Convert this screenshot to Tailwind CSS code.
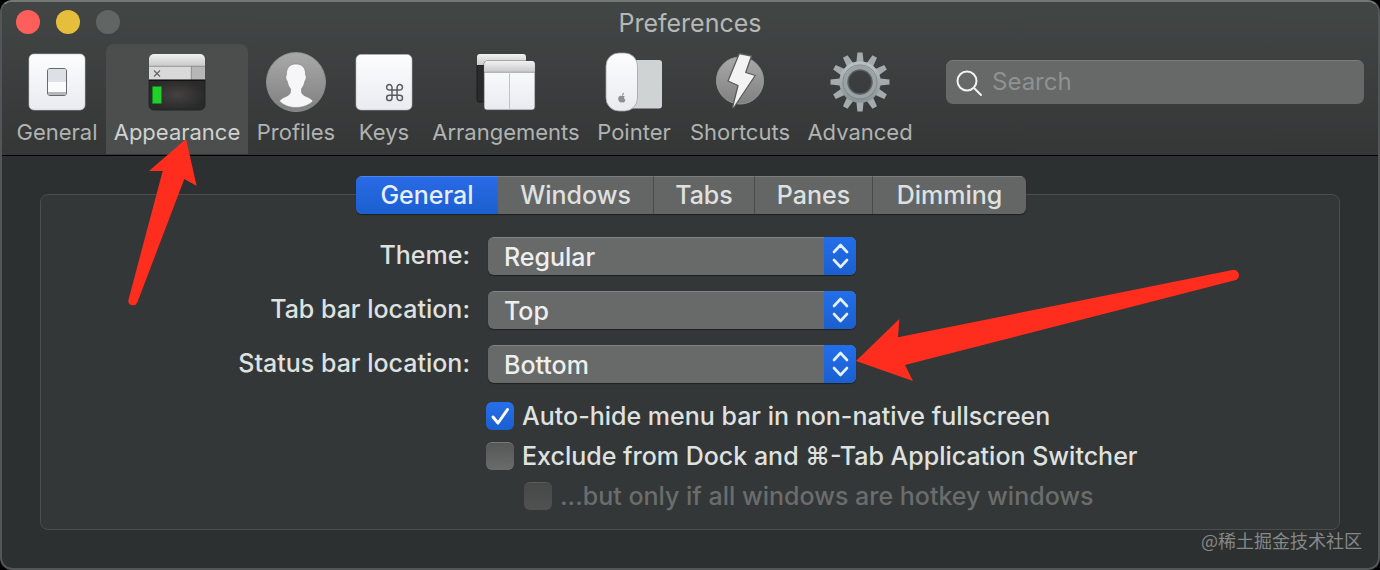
<!DOCTYPE html>
<html lang="en" class="bg-black">
<head>
  <meta charset="UTF-8" />
  <meta name="viewport" content="width=device-width, initial-scale=1.0"/>
  <title>Preferences</title>

  <!-- Tailwind CSS -->
  <script src="https://cdn.jsdelivr.net/npm/@tailwindcss/browser@4"></script>
</head>
<body class="bg-black font-['Inter','Noto_Sans_CJK_SC',sans-serif] text-[#dfe1e0]">

  <!-- Window -->
  <div class="relative min-h-screen flex flex-col overflow-hidden rounded-[12px] border-2 border-[#535656] border-t-[#757878] bg-[#2d3030]">

    <!-- Title bar + toolbar -->
    <header class="border-b border-black bg-linear-to-b from-[#424645] to-[#353737]">
      <div class="relative h-[42px] flex items-center px-3.5">
        <div class="flex gap-4 pb-0.5">
          <button aria-label="Close" class="size-6 rounded-full bg-[#fe5f5b]"></button>
          <button aria-label="Minimize" class="size-6 rounded-full bg-[#e5bf3c]"></button>
          <button aria-label="Zoom" class="size-6 rounded-full bg-[#616564]" disabled></button>
        </div>
        <h1 class="absolute inset-x-0 text-center text-[25px] leading-[42px] text-[#b5b8b7] pointer-events-none">Preferences</h1>
      </div>

      <div class="flex items-start justify-between h-[111px] pl-1.5 pr-3.5">
        <nav class="flex text-[22px] leading-7 text-[#b0b3b2]">
          <button class="w-[98px] h-[110px] pt-2 flex flex-col items-center gap-1.5">
            <svg class="size-[60px]" viewBox="0 0 60 60">
              <defs>
                <linearGradient id="white" x1="0" y1="0" x2="0" y2="1"><stop offset="0" stop-color="#fdfdfe"/><stop offset="1" stop-color="#e9ebf0"/></linearGradient>
                <linearGradient id="bar" x1="0" y1="0" x2="0" y2="1"><stop offset="0" stop-color="#f1f1f1"/><stop offset="1" stop-color="#c9c9cb"/></linearGradient>
                <linearGradient id="disc" x1="0" y1="0" x2="0" y2="1"><stop offset="0" stop-color="#a9a9a9"/><stop offset="1" stop-color="#808080"/></linearGradient>
                <linearGradient id="steel" x1="0" y1="0" x2="0" y2="1"><stop offset="0" stop-color="#b9bfc1"/><stop offset="1" stop-color="#8d9598"/></linearGradient>
              </defs>
              <rect x="2" y="2" width="56" height="56" rx="5" fill="url(#white)" stroke="#c5c8cb" stroke-width=".6"/>
              <rect x="20.5" y="16.5" width="19" height="27" rx="2.5" fill="#fafbfc" stroke="#66696d"/>
              <path d="M21 19a2 2 0 0 1 2-2h14a2 2 0 0 1 2 2v11H21z" fill="#dde0e5"/>
              <path d="M21 40h18v1a2 2 0 0 1-2 2H23a2 2 0 0 1-2-2z" fill="#b4b7ba"/>
            </svg>
            <span>General</span>
          </button>
          <button class="w-[142px] h-[110px] pt-2 flex flex-col items-center gap-1.5 rounded-t-lg bg-[#4b4e4d] text-[#cfd2d1]" aria-current="page">
            <svg class="size-[60px]" viewBox="0 0 60 60">
              <defs><radialGradient id="term"><stop offset="0" stop-color="#454241"/><stop offset="1" stop-color="#2a2a2a"/></radialGradient></defs>
              <path d="M2 28h56v25a5 5 0 0 1-5 5H7a5 5 0 0 1-5-5z" fill="url(#term)" stroke="#1d1e1e" stroke-width=".8"/>
              <path d="M2 14V7a5 5 0 0 1 5-5h46a5 5 0 0 1 5 5v7z" fill="url(#bar)"/>
              <path d="M2 14h42v14H2z" fill="#d9d9da"/>
              <path d="M44 14h14v14H44z" fill="#b7b7b8"/>
              <path d="M2 14.3h56M44.3 14v14" stroke="#858585" stroke-width=".8"/>
              <path d="M2 28h56" stroke="#000" stroke-width="1.2"/>
              <path d="m7 18.500 6 6m0-6-6 6" stroke="#666" stroke-width="1.2"/>
              <rect x="5" y="34" width="10" height="18" rx="1" fill="#138a1b"/>
              <rect x="6" y="35" width="8" height="16" fill="#20d12c"/>
            </svg>
            <span>Appearance</span>
          </button>
          <button class="w-[96px] h-[110px] pt-2 flex flex-col items-center gap-1.5">
            <svg class="size-[60px]" viewBox="0 0 60 60">
              <circle cx="30" cy="30" r="29.500" fill="url(#disc)" stroke="#8c8e8e"/>
              <path d="M30 12c6.500 0 9.800 4 9.500 11 1.200.5.700 5-.6 6-.6 3.500-2 6-3.400 7.500v4c1 4 9 4.500 11.500 8.500C43 53 37 55.500 30 55.500S17 53 13.500 49c2.500-4 10-4.500 11-8.500v-4c-1.500-1.500-2.700-4-3.300-7.500-1.400-1-1.900-5.500-.7-6-.3-7 3-11 9.500-11z" fill="#f6f6f8" stroke="#777" stroke-width=".5"/>
            </svg>
            <span>Profiles</span>
          </button>
          <button class="w-[80px] h-[110px] pt-2 flex flex-col items-center gap-1.5">
            <svg class="size-[60px]" viewBox="0 0 60 60">
              <rect x="2" y="2.500" width="56" height="55.500" rx="5" fill="url(#white)" stroke="#b4b7ba" stroke-width=".6"/>
              <path d="M38 38v-2.600a2.700 2.700 0 1 0-2.700 2.600h10.500a2.700 2.700 0 1 0-2.700-2.600v10.500a2.700 2.700 0 1 0 2.700-2.700H35.300a2.700 2.700 0 1 0 2.700 2.700z" fill="none" stroke="#585b5f" stroke-width="1.500"/>
            </svg>
            <span>Keys</span>
          </button>
          <button class="w-[164px] h-[110px] pt-2 flex flex-col items-center gap-1.5">
            <svg class="size-[60px]" viewBox="0 0 60 60">
              <path d="M1 13h30v37H3a2 2 0 0 1-2-2z" fill="#2a2a2b" stroke="#151616" stroke-width=".8"/>
              <path d="M1 13V5a3 3 0 0 1 3-3h43a3 3 0 0 1 3 3v8z" fill="url(#bar)"/>
              <rect x="8" y="9" width="51" height="49" rx="3" fill="url(#white)" stroke="#4a4c4d" stroke-width=".7"/>
              <path d="M8.300 20v-8a3 3 0 0 1 3-3H56a3 3 0 0 1 2.700 3v8z" fill="url(#bar)"/>
              <path d="M8 20.300h51" stroke="#8c8e91" stroke-width=".8"/>
              <path d="M33.500 20v38" stroke="#bbbdc1" stroke-width=".9"/>
            </svg>
            <span>Arrangements</span>
          </button>
          <button class="w-[92px] h-[110px] pt-2 flex flex-col items-center gap-1.5">
            <svg class="size-[60px]" viewBox="0 0 60 60">
              <rect x="20" y="8" width="38" height="48.500" rx="3" fill="#d0d3d4"/>
              <rect x="2" y="1" width="31.500" height="58" rx="13" fill="url(#white)" stroke="#9fa2a4" stroke-width=".8"/>
              <path d="M18 43.500c0-1.500.8-2.500 2-2.800 0 1.500-.8 2.500-2 2.800zm2.600.7c-.9 1.300-.5 3 .9 3.700-.7 1.800-1.600 2.900-2.500 2.600-.7-.3-1.200-.3-1.900 0-1.400.5-3.100-2.200-2.900-4.200.2-2 2-2.900 3.600-2.200 1-.5 2-.5 2.800.1z" fill="#8d8f92"/>
            </svg>
            <span>Pointer</span>
          </button>
          <button class="w-[120px] h-[110px] pt-2 flex flex-col items-center gap-1.5">
            <svg class="size-[60px]" viewBox="0 0 60 60">
              <circle cx="30" cy="28.500" r="23.500" fill="url(#disc)" stroke="#979999"/>
              <path d="M29.300 1.500 41.500 4l-5.800 16.500 9.500 3L23.500 56l-1-.5 5.500-22-10-4.500z" fill="#f3f3f4" stroke="#5b5c5d" stroke-width="1.300" stroke-linejoin="round"/>
            </svg>
            <span>Shortcuts</span>
          </button>
          <button class="w-[120px] h-[110px] pt-2 flex flex-col items-center gap-1.5">
            <svg class="size-[60px]" viewBox="0 0 60 60">
              <!-- each shape is a pair of opposite teeth -->
              <defs><path id="teeth" d="M27.400.5h5.200L33.800 12h-7.600zM27.400 59.500h5.200L33.800 48h-7.600z"/></defs>
              <g fill="#a4abae">
                <use href="#teeth"/>
                <use href="#teeth" transform="rotate(30 30 30)"/>
                <use href="#teeth" transform="rotate(60 30 30)"/>
                <use href="#teeth" transform="rotate(90 30 30)"/>
                <use href="#teeth" transform="rotate(120 30 30)"/>
                <use href="#teeth" transform="rotate(150 30 30)"/>
              </g>
              <circle cx="30" cy="30" r="16.500" fill="none" stroke="url(#steel)" stroke-width="8.500"/>
              <circle cx="30" cy="30" r="17" fill="none" stroke="#7d8588" stroke-width="1"/>
              <circle cx="30" cy="30" r="14.500" fill="none" stroke="#9ba3a5" stroke-width="3.500"/>
              <circle cx="30" cy="30" r="12" fill="none" stroke="#5b6365" stroke-width="1.500"/>
            </svg>
            <span>Advanced</span>
          </button>
        </nav>

        <label class="mt-4 flex h-11 w-[418px] items-center gap-2 rounded-[7px] border-t border-[#7a7d7c] bg-[#666968] pl-2.5">
          <svg class="size-7" viewBox="0 0 28 28" fill="none" stroke="#f2f3f3" stroke-width="2" stroke-linecap="round">
            <circle cx="11" cy="12" r="9.500"/>
            <path d="m18 19 7 7"/>
          </svg>
          <input type="search" aria-label="Search" placeholder="Search"
                 class="min-w-0 flex-1 bg-transparent pb-0.5 text-2xl leading-8 outline-none placeholder:text-[#8e9291]"/>
        </label>
      </div>
    </header>

    <!-- Appearance pane -->
    <main class="flex flex-1 flex-col px-[38px] pt-[38px] pb-[38px]">
      <section class="flex-1 rounded-lg border border-[#4a4e4d] bg-[#343737] text-[25px] leading-8 font-medium">

        <div class="-mt-[19px] flex justify-center pl-0.5">
          <div class="flex h-[38px] overflow-hidden rounded-md bg-[#646665] shadow-[0_1px_1px_#1f2121]" role="tablist">
            <button role="tab" aria-selected="true" class="w-[142px] border-t border-[#4a86ee] bg-linear-to-b from-[#2a6ae6] to-[#1b5fd0] pb-0.5 text-[#e4eefc]">General</button>
            <button role="tab" class="w-[156px] border-t border-r border-t-[#7c7e7d] border-r-[#484b4a] pb-0.5">Windows</button>
            <button role="tab" class="w-[101px] border-t border-r border-t-[#7c7e7d] border-r-[#484b4a] pb-0.5">Tabs</button>
            <button role="tab" class="w-[118px] border-t border-r border-t-[#7c7e7d] border-r-[#484b4a] pb-0.5">Panes</button>
            <button role="tab" class="w-[153px] border-t border-t-[#7c7e7d] pb-0.5">Dimming</button>
          </div>
        </div>

        <div class="mt-[23px] grid grid-cols-[429px_368px] items-center gap-x-[18px] gap-y-4">
          <label for="theme" class="pb-0.5 text-right">Theme:</label>
          <div class="relative h-[38px]">
            <select id="theme" class="h-full w-full appearance-none rounded-md border-t border-[#828483] bg-[#686a69] pl-4 text-[#eeefef] shadow-[0_1px_1px_#1f2121]">
              <option>Regular</option>
            </select>
            <svg class="pointer-events-none absolute right-0 top-0 h-[38px] w-8 rounded-r-md bg-linear-to-b from-[#226fea] to-[#1b5fd0]" viewBox="0 0 32 38" fill="none" stroke="#e3effd" stroke-width="2.600" stroke-linecap="round" stroke-linejoin="round">
              <path d="m10 15 6.500-7 6.500 7M10 23l6.500 7 6.500-7"/>
            </svg>
          </div>

          <label for="tabbar" class="pb-0.5 text-right">Tab bar location:</label>
          <div class="relative h-[38px]">
            <select id="tabbar" class="h-full w-full appearance-none rounded-md border-t border-[#828483] bg-[#686a69] pl-4 text-[#eeefef] shadow-[0_1px_1px_#1f2121]">
              <option>Top</option>
            </select>
            <svg class="pointer-events-none absolute right-0 top-0 h-[38px] w-8 rounded-r-md bg-linear-to-b from-[#226fea] to-[#1b5fd0]" viewBox="0 0 32 38" fill="none" stroke="#e3effd" stroke-width="2.600" stroke-linecap="round" stroke-linejoin="round">
              <path d="m10 15 6.500-7 6.500 7M10 23l6.500 7 6.500-7"/>
            </svg>
          </div>

          <label for="statusbar" class="pb-0.5 text-right">Status bar location:</label>
          <div class="relative h-[38px]">
            <select id="statusbar" class="h-full w-full appearance-none rounded-md border-t border-[#828483] bg-[#686a69] pl-4 text-[#eeefef] shadow-[0_1px_1px_#1f2121]">
              <option>Bottom</option>
            </select>
            <svg class="pointer-events-none absolute right-0 top-0 h-[38px] w-8 rounded-r-md bg-linear-to-b from-[#226fea] to-[#1b5fd0]" viewBox="0 0 32 38" fill="none" stroke="#e3effd" stroke-width="2.600" stroke-linecap="round" stroke-linejoin="round">
              <path d="m10 15 6.500-7 6.500 7M10 23l6.500 7 6.500-7"/>
            </svg>
          </div>
        </div>

        <div class="mt-[17px] ml-[445px] flex flex-col gap-2">
          <label class="flex items-center gap-2">
            <span class="relative size-7">
              <input type="checkbox" checked class="block size-7 appearance-none rounded-md bg-linear-to-b from-[#2670ea] to-[#1b5fd0]"/>
              <svg class="pointer-events-none absolute inset-0" viewBox="0 0 28 28" fill="none" stroke="#fff" stroke-width="3" stroke-linecap="round" stroke-linejoin="round">
                <path d="m7 15 5 6 9.500-13.500"/>
              </svg>
            </span>
            <span>Auto-hide menu bar in non-native fullscreen</span>
          </label>
          <label class="flex items-center gap-2">
            <input type="checkbox" class="size-7 appearance-none rounded-md border-t border-[#767877] bg-linear-to-b from-[#565857] to-[#6a6c6b]"/>
            <span>Exclude from Dock and ⌘-Tab Application Switcher</span>
          </label>
          <label class="ml-[38px] flex items-center gap-2 text-[#6a6d6c]">
            <input type="checkbox" disabled class="size-7 appearance-none rounded-md border-t border-[#585b5a] bg-linear-to-b from-[#464948] to-[#4f5251]"/>
            <span>...but only if all windows are hotkey windows</span>
          </label>
        </div>
      </section>
    </main>

    <!-- Red arrows drawn over the window -->
    <svg class="pointer-events-none absolute left-[124px] top-[134px] h-[174px] w-[76px]" viewBox="126 136 76 174" fill="#ff2d1e">
      <path d="m186 139 10.700 47-12.400-7-47 123.500a4.700 4.700 0 0 1-9-2L162.700 171H149z"/>
    </svg>
    <svg class="pointer-events-none absolute left-[850px] top-[264px] h-[122px] w-[394px]" viewBox="852 266 394 122" fill="#ff2d1e">
      <path d="m856 361 43.300-42-1.300 18.300L1232.500 270a5.300 5.300 0 0 1 2.500 10.300L905 365l8 16z"/>
    </svg>

    <p class="absolute right-4 bottom-4 text-lg leading-6 text-[#858887] font-['Noto_Sans_CJK_SC',sans-serif]">@稀土掘金技术社区</p>
  </div>
</body>
</html>
